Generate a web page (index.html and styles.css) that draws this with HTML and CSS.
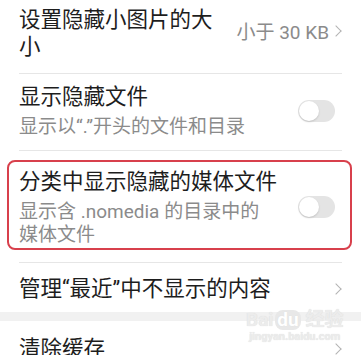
FILE: index.html
```html
<!DOCTYPE html>
<html lang="zh-CN">
<head>
  <meta charset="UTF-8">
  <meta name="viewport" content="width=device-width, initial-scale=1.0">
  <title>隐藏文件设置</title>
  <link rel="stylesheet" href="styles.css">
</head>
<body>

  <div class="settings">
    <div class="group">
      <div class="row row-first">
        <div class="row-text">
          <p class="title">设置隐藏小图片的大<br>小</p>
        </div>
        <div class="value">小于 30 KB <span class="chevron"></span></div>
      </div>

      <div class="row row-second">
        <div class="row-text">
          <p class="title">显示隐藏文件</p>
          <p class="subtitle">显示以“.”开头的文件和目录</p>
        </div>
        <div class="switch"><span class="knob"></span></div>
      </div>

      <!-- highlighted item -->
      <div class="row row-marked">
        <div class="row-text">
          <p class="title">分类中显示隐藏的媒体文件</p>
          <p class="subtitle">显示含 .nomedia 的目录中的<br>媒体文件</p>
        </div>
        <div class="switch"><span class="knob"></span></div>
        <div class="mark"></div>
      </div>

      <div class="row row-last">
        <div class="row-text">
          <p class="title">管理“最近”中不显示的内容</p>
        </div>
        <span class="chevron"></span>
      </div>
    </div>

    <div class="group">
      <div class="row row-cache">
        <div class="row-text">
          <p class="title">清除缓存</p>
        </div>
        <span class="chevron"></span>
      </div>
    </div>
  </div>

  <div class="watermark">
    <span class="wm-logo">Bai<span class="wm-du">du</span> 经验</span>
    <span class="wm-url">jingyan.baidu.com</span>
  </div>

</body>
</html>
```

FILE: styles.css
```css
body {
  margin: 0;
  background-color: #fff;
  font-family: Roboto, "Noto Sans CJK SC", sans-serif;
  position: relative;
  overflow: hidden;
}

p {
  margin: 0;
}

.settings {
  background-color: #f1f1f1;
}

.group {
  background-color: #fff;
  padding: 0 19px;
}

.group + .group {
  margin-top: 9px;
}

.row {
  display: flex;
  align-items: center;
  border-bottom: 1px solid #e6e6e6;
  position: relative;
}

.group .row:last-child {
  border-bottom: none;
}

.row-text {
  flex: 1;
}

.title {
  font-size: 21.5px;
  line-height: 27px;
  color: #1d1d1d;
}

.subtitle {
  font-size: 19px;
  line-height: 23px;
  color: #8b8b8b;
  margin-top: 5px;
}

.row-first {
  padding: 6px 0 13px;
}

.row-first .value {
  margin-bottom: 5px;
}

.row-second {
  padding: 9px 0 12px;
}

.row-marked {
  padding: 17px 0 16px;
}

.row-last {
  padding: 12px 0 10px;
}

.row-cache {
  padding: 14px 0 10px;
}

.value {
  font-size: 19px;
  color: #8b8b8b;
  display: flex;
  align-items: center;
  gap: 1px;
}

/* thin ">" arrow */
.chevron {
  display: inline-block;
  width: 7px;
  height: 7px;
  border-top: 1.5px solid #b3b3b3;
  border-right: 1.5px solid #b3b3b3;
  transform: rotate(45deg);
  margin: 0 2px 0 2px;
}

.switch {
  width: 37px;
  height: 22px;
  border-radius: 11px;
  background-color: #e4e4e4;
  position: relative;
  margin-right: 7px;
}

.knob {
  position: absolute;
  left: 1px;
  top: 1px;
  width: 20px;
  height: 20px;
  border-radius: 50%;
  background-color: #fff;
  box-shadow: 0 1px 2px rgba(0, 0, 0, 0.15);
}

/* red annotation box over the third item */
.mark {
  position: absolute;
  left: -12px;
  right: -10px;
  top: 9px;
  bottom: 12px;
  border: 2px solid #d8404c;
  border-radius: 8px;
  pointer-events: none;
}

.watermark {
  position: absolute;
  left: 246px;
  top: 310px;
  display: flex;
  flex-direction: column;
  align-items: center;
  color: #ececec;
  text-shadow: 0 0 1px #d8d8d8;
  pointer-events: none;
}

.wm-logo {
  font-size: 19px;
  font-weight: bold;
  line-height: 20px;
}

.wm-du {
  display: inline-block;
  background-color: #e8e8e8;
  color: #fff;
  border-radius: 8px;
  padding: 0 2px;
  margin-left: 2px;
}

.wm-url {
  font-size: 11px;
  font-weight: bold;
  line-height: 14px;
}
```
